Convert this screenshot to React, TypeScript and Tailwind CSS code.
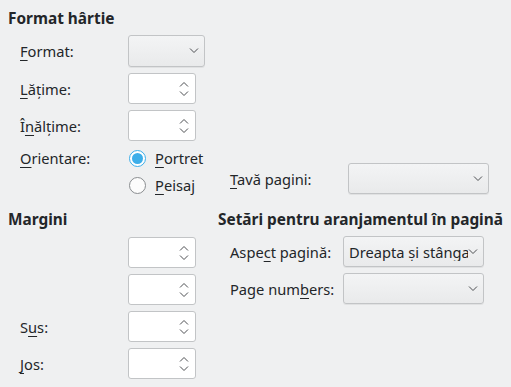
import type { ReactNode } from "react";

function Chevron({ up = false }: { up?: boolean }) {
  return (
    <svg width="10" height="6" viewBox="0 0 10 6" className="shrink-0">
      <path
        d={up ? "M1 5.5 L5 1.5 L9 5.5" : "M1 0.5 L5 4.5 L9 0.5"}
        fill="none"
        stroke="#4d4f52"
        strokeWidth="1"
      />
    </svg>
  );
}

function Combo({ w, text }: { w: string; text?: string }) {
  return (
    <div
      className={`${w} flex h-[31px] items-center justify-between rounded-[3px] border border-[#c2c4c6] bg-gradient-to-b from-[#f3f4f5] to-[#e9eaeb] pl-[5px] pr-[5px] shadow-[0_1px_0_rgba(0,0,0,0.06)]`}
    >
      <span className="min-w-0 overflow-hidden whitespace-nowrap">{text}</span>
      <Chevron />
    </div>
  );
}

function Spin() {
  return (
    <div className="flex h-[31px] w-[68px] items-center justify-end rounded-[3px] border border-[#c2c4c6] bg-white pr-[6px]">
      <div className="flex flex-col gap-[4px]">
        <Chevron up />
        <Chevron />
      </div>
    </div>
  );
}

function U({ children }: { children: ReactNode }) {
  return <span className="underline decoration-1 underline-offset-[3px]">{children}</span>;
}

function Radio({ on }: { on?: boolean }) {
  return on ? (
    <span className="grid size-[17px] place-items-center rounded-full border border-[#3daee9] bg-white">
      <span className="size-[11px] rounded-full bg-[#3daee9]" />
    </span>
  ) : (
    <span className="size-[17px] rounded-full border border-[#8a8d90] bg-[#fcfcfc]" />
  );
}

export default function App() {
  return (
    <div className="h-[387px] w-[511px] overflow-hidden bg-[#eff0f1] font-['Noto_Sans',sans-serif] text-[14.67px] leading-[18px] text-[#232629]">
      {/* Paper format */}
      <div className="flex pt-[10px]">
        <div className="w-[218px] pl-[8px]">
          <h2 className="text-[15.4px] font-bold">Format hârtie</h2>
          <div className="mt-[7px] grid grid-cols-[108px_auto] items-center gap-y-[6px] pl-[12px]">
            <span>
              <U>F</U>ormat:
            </span>
            <Combo w="w-[77px] !h-[32px]" />
            <span>
              <U>L</U>ățime:
            </span>
            <Spin />
            <span>
              Î<U>n</U>ălțime:
            </span>
            <Spin />
            <span className="self-start pt-[2px]">
              <U>O</U>rientare:
            </span>
            <div className="flex flex-col gap-[9px] pt-[2px]">
              <label className="flex items-center gap-[9px] pl-px">
                <Radio on />
                <span>
                  <U>P</U>ortret
                </span>
              </label>
              <label className="flex items-center gap-[9px] pl-px">
                <Radio />
                <span>
                  <U>P</U>eisaj
                </span>
              </label>
            </div>
          </div>
        </div>
        <div className="flex-1 pt-[153px]">
          <div className="flex items-center">
            <span className="w-[130px] pl-[12px]">
              <U>T</U>avă pagini:
            </span>
            <Combo w="w-[141px]" />
          </div>
        </div>
      </div>

      {/* Margins + layout */}
      <div className="mt-[17px] flex">
        <div className="w-[218px] pl-[8px]">
          <h2 className="text-[15.4px] font-bold">Margini</h2>
          <div className="mt-[8px] grid grid-cols-[108px_auto] items-center gap-y-[6px] pl-[12px]">
            <span />
            <Spin />
            <span />
            <Spin />
            <span>
              S<U>u</U>s:
            </span>
            <Spin />
            <span>
              <U>J</U>os:
            </span>
            <Spin />
          </div>
        </div>
        <div className="flex-1">
          <h2 className="whitespace-nowrap text-[15.4px] font-bold">Setări pentru aranjamentul în pagină</h2>
          <div className="mt-[7px] grid grid-cols-[113px_auto] items-center gap-y-[6px] pl-[12px]">
            <span>
              Aspe<U>c</U>t pagină:
            </span>
            <Combo w="w-[141px]" text="Dreapta și stânga" />
            <span>
              Page num<U>b</U>ers:
            </span>
            <Combo w="w-[141px]" />
          </div>
        </div>
      </div>
    </div>
  );
}
